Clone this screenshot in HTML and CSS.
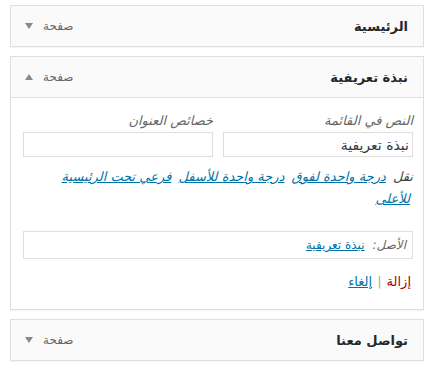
FILE: index.html
```html
<!DOCTYPE html>
<html lang="ar" dir="rtl">

<head>
  <meta charset="UTF-8">
  <title>القوائم</title>
  <link rel="stylesheet" href="styles.css">
</head>

<body>
  <ul class="menu">

    <li class="menuItem">
      <div class="handle">
        <span class="title">الرئيسية</span>
        <span class="controls">
          <span class="type">صفحة</span>
          <span class="arrow down"></span>
        </span>
      </div>
    </li>

    <li class="menuItem open">
      <div class="handle">
        <span class="title">نبذة تعريفية</span>
        <span class="controls">
          <span class="type">صفحة</span>
          <span class="arrow up"></span>
        </span>
      </div>

      <div class="settings">
        <div class="fields">
          <label class="field">
            <span class="label">النص في القائمة</span>
            <input type="text" value="نبذة تعريفية">
          </label>
          <label class="field">
            <span class="label">خصائص العنوان</span>
            <input type="text" value="">
          </label>
        </div>

        <p class="move">
          <span>نقل</span>
          <a href="#">درجة واحدة لفوق</a>
          <a href="#">درجة واحدة للأسفل</a>
          <a href="#">فرعي تحت الرئيسية</a>
          <a href="#">للأعلى</a>
        </p>

        <div class="original">
          <span class="origLabel">الأصل:</span>
          <a href="#">نبذة تعريفية</a>
        </div>

        <div class="actions">
          <a href="#" class="remove">إزالة</a>
          <span class="sep">|</span>
          <a href="#" class="cancel">إلغاء</a>
        </div>
      </div>
    </li>

    <li class="menuItem">
      <div class="handle">
        <span class="title">تواصل معنا</span>
        <span class="controls">
          <span class="type">صفحة</span>
          <span class="arrow down"></span>
        </span>
      </div>
    </li>

  </ul>
</body>

</html>
```

FILE: styles.css
```css
body {
  margin: 0;
  background: #fff;
  color: #23282d;
  font-family: "DejaVu Sans", sans-serif;
  font-size: 13px;
}

.menu {
  list-style: none;
  margin: 0;
  padding: 5px 9px 0 10px;
}

.menuItem {
  margin-bottom: 9px;
  box-shadow: 0 1px 1px rgba(0, 0, 0, 0.04);
}

.handle {
  display: flex;
  justify-content: space-between;
  align-items: center;
  height: 40px;
  padding: 0 15px 0 14px;
  border: 1px solid #dfdfdf;
  background: #fafafa;
}

.title {
  font-weight: bold;
  font-size: 13px;
  color: #23282d;
}

.controls {
  display: flex;
  align-items: center;
  gap: 10px;
  color: #666;
  font-size: 12px;
}

.arrow {
  width: 0;
  height: 0;
  border-left: 4px solid transparent;
  border-right: 4px solid transparent;
}

.arrow.down {
  border-top: 6px solid #888;
}

.arrow.up {
  border-bottom: 6px solid #888;
}

.settings {
  border: 1px solid #dfdfdf;
  border-top: none;
  padding: 14px 10px 20px 12px;
}

.fields {
  display: flex;
  gap: 10px;
}

.field {
  display: flex;
  flex-direction: column;
  width: 190px;
}

.label {
  font-style: italic;
  color: #666;
  font-size: 13px;
  line-height: 18px;
  margin-bottom: 2px;
}

.field input {
  box-sizing: border-box;
  height: 25px;
  margin: 0;
  padding: 2px 3px;
  border: 1px solid #ddd;
  font-family: inherit;
  font-size: 14px;
  color: #32373c;
  direction: rtl;
}

.move {
  margin: 9px 0 0;
  font-style: italic;
  line-height: 22px;
  color: #444;
  font-size: 13px;
  padding-left: 10px;
}

.move a {
  color: #0073aa;
  margin-right: 3px;
}

.original {
  margin-top: 21px;
  border: 1px solid #dfdfdf;
  height: 26px;
  display: flex;
  align-items: center;
  padding: 0 6px;
  gap: 8px;
  font-size: 12px;
}

.origLabel {
  font-style: italic;
  color: #666;
}

.original a {
  color: #0073aa;
}

.actions {
  margin-top: 15px;
  display: flex;
  align-items: center;
  gap: 5px;
  padding-right: 2px;
}

.remove {
  color: #a00;
  text-decoration: none;
}

.sep {
  color: #aaa;
}

.cancel {
  color: #0073aa;
}
```
